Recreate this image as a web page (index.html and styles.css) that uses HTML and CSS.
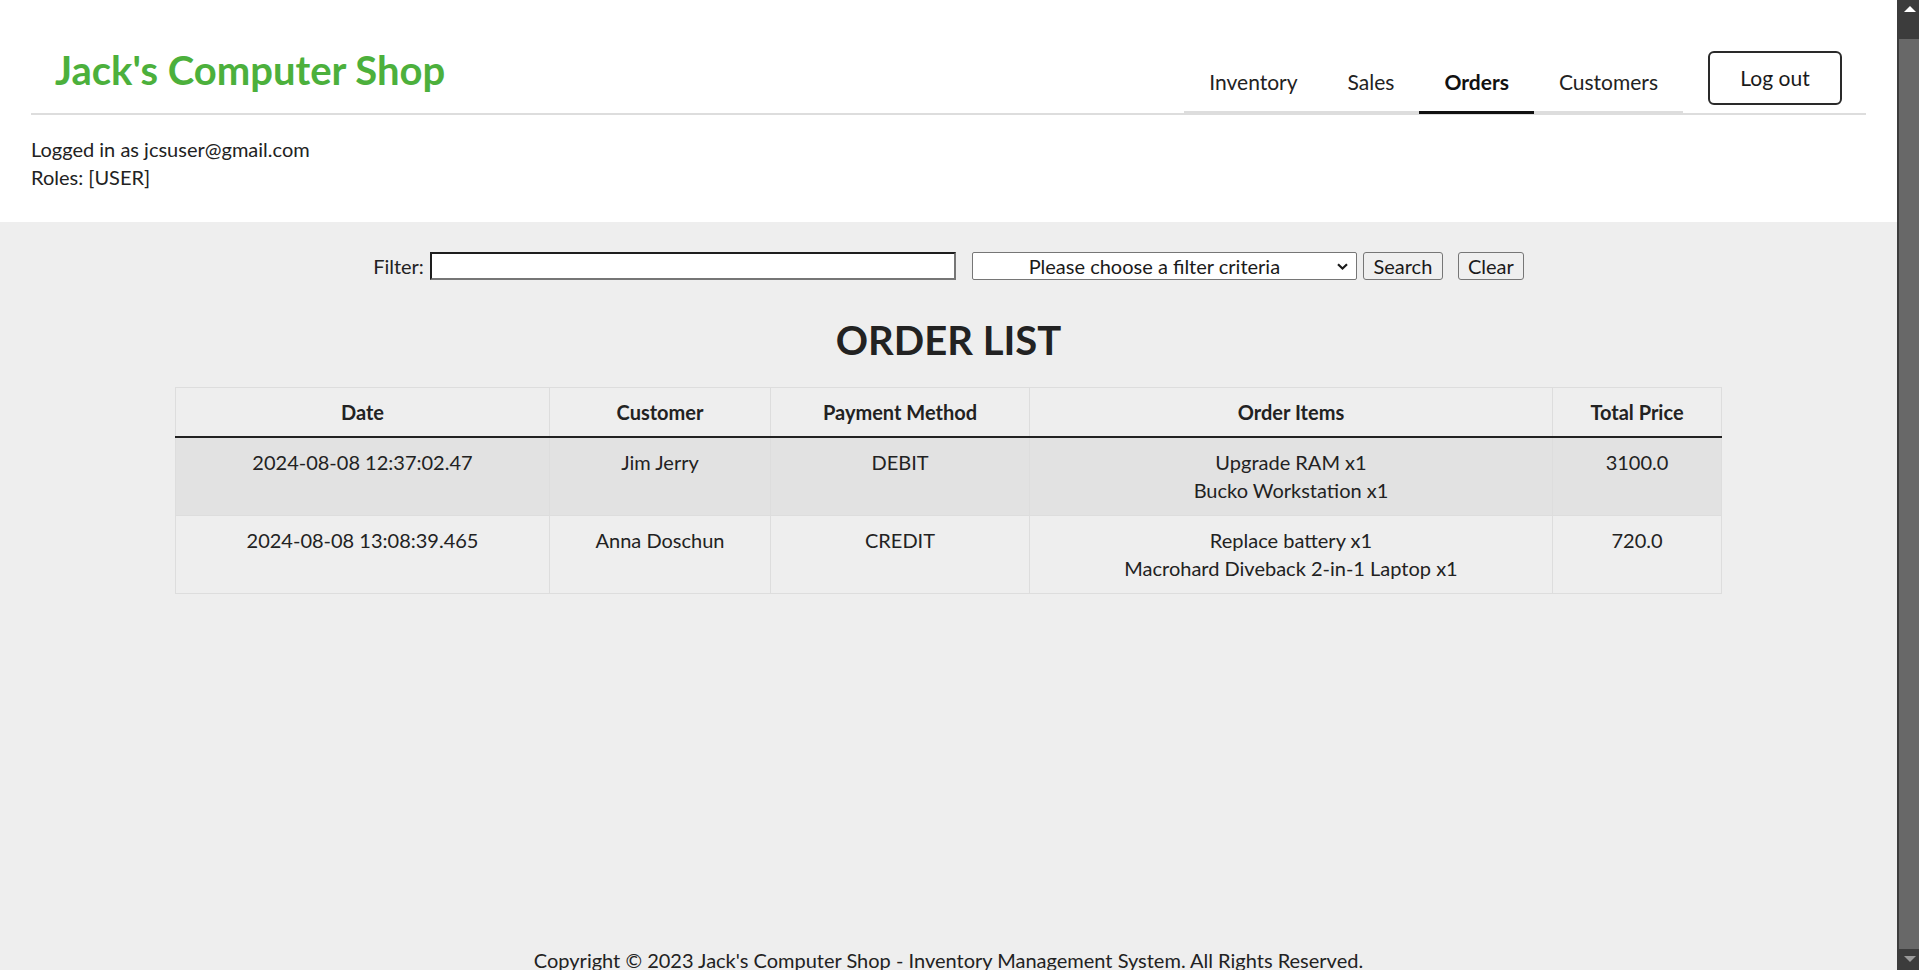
FILE: index.html
```html
<!DOCTYPE html>
<html lang="en">
<head>
<meta charset="utf-8">
<title>Jack's Computer Shop - Orders</title>
<link rel="stylesheet" href="styles.css">
</head>
<body>
<div class="viewport">
  <div class="page">
    <header class="site-header">
      <div class="topbar">
        <h1 class="brand">Jack's Computer Shop</h1>
        <nav class="tabs">
          <a class="tab" href="#">Inventory</a>
          <a class="tab" href="#">Sales</a>
          <a class="tab active" href="#">Orders</a>
          <a class="tab" href="#">Customers</a>
        </nav>
        <button class="logout" type="button">Log out</button>
      </div>
      <div class="user-info">
        <div>Logged in as jcsuser@gmail.com</div>
        <div>Roles: [USER]</div>
      </div>
    </header>

    <main class="main">
      <form class="filter-row">
        <label class="filter-label" for="filter">Filter:</label>
        <input class="filter-input" id="filter" type="text">
        <span class="select-wrap">
          <select class="filter-select">
            <option>Please choose a filter criteria</option>
          </select>
          <svg class="chevron" width="11" height="7" viewBox="0 0 11 7" aria-hidden="true"><path d="M1 1.3 L5.5 5.5 L10 1.3" fill="none" stroke="#1a1a1a" stroke-width="2.2"/></svg>
        </span>
        <button class="btn btn-search" type="button">Search</button>
        <button class="btn btn-clear" type="button">Clear</button>
      </form>

      <h1 class="list-title">ORDER LIST</h1>

      <table class="orders">
        <colgroup>
          <col class="c-date"><col class="c-cust"><col class="c-pay"><col class="c-items"><col class="c-total">
        </colgroup>
        <thead>
          <tr>
            <th>Date</th>
            <th>Customer</th>
            <th>Payment Method</th>
            <th>Order Items</th>
            <th>Total Price</th>
          </tr>
        </thead>
        <tbody>
          <tr class="hl">
            <td>2024-08-08 12:37:02.47</td>
            <td>Jim Jerry</td>
            <td>DEBIT</td>
            <td>Upgrade RAM x1<br>Bucko Workstation x1</td>
            <td>3100.0</td>
          </tr>
          <tr>
            <td>2024-08-08 13:08:39.465</td>
            <td>Anna Doschun</td>
            <td>CREDIT</td>
            <td>Replace battery x1<br>Macrohard Diveback 2-in-1 Laptop x1</td>
            <td>720.0</td>
          </tr>
        </tbody>
      </table>
    </main>

    <footer class="footer">Copyright © 2023 Jack's Computer Shop - Inventory Management System. All Rights Reserved.</footer>
  </div>
</div>
<div class="scrollbar" aria-hidden="true">
  <div class="sb-btn"><svg width="12" height="6" viewBox="0 0 12 6"><path d="M0 6 L6 0 L12 6 Z" fill="#ffffff"/></svg></div>
  <div class="sb-track"><div class="sb-thumb"></div></div>
  <div class="sb-btn sb-down"><svg width="12" height="6" viewBox="0 0 12 6"><path d="M0 0 L12 0 L6 6 Z" fill="#9a9a9a"/></svg></div>
</div>
</body>
</html>
```

FILE: styles.css
```css
* { box-sizing: border-box; }

html, body { height: 100%; }

body {
  margin: 0;
  display: flex;
  overflow: hidden;
  font-family: Lato, "Open Sans", sans-serif;
  font-size: 20px;
  line-height: 28px;
  color: #222222;
  background: #eeeeee;
}

.viewport {
  flex: 1;
  min-width: 0;
  height: 100vh;
  overflow: hidden;
}

/* fake classic scrollbar */
.scrollbar {
  width: 22px;
  flex: none;
  height: 100vh;
  display: flex;
  flex-direction: column;
  background: #3c3c3c;
}

.sb-btn {
  height: 21px;
  display: flex;
  justify-content: center;
  padding: 6px 0 0 3px;
}

.sb-down { padding-top: 7px; }

.sb-btn svg { display: block; }

.sb-track {
  flex: 1;
  display: flex;
  padding: 18px 0 0 2px;
}

.sb-thumb {
  flex: 1;
  background: #686868;
}

.page {
  min-height: 990px;
  display: flex;
  flex-direction: column;
}

/* Header */
.site-header {
  background: #ffffff;
  padding: 0 31px 31px;
}

.topbar {
  display: flex;
  align-items: flex-end;
  height: 115px;
  padding: 26px 24px 0;
  border-bottom: 2px solid #dddddd;
}

.brand {
  align-self: center;
  margin: 0 auto 0 0;
  font-size: 40px;
  line-height: 56px;
  font-weight: 700;
  color: #4cb03c;
}

.tabs {
  display: flex;
  border-bottom: 3px solid #dddddd;
  margin-bottom: -1px;
}

.tab {
  display: block;
  padding: 13px 25px 15px;
  margin-bottom: -3px;
  border-bottom: 3px solid transparent;
  font-size: 21px;
  color: #222222;
  text-decoration: none;
}

.tab.active {
  font-weight: 700;
  color: #111111;
  border-bottom-color: #111111;
}

.logout {
  width: 134px;
  height: 54px;
  margin: 0 0 8px 25px;
  padding: 0 0 1px;
  border: 2px solid #2a2a2a;
  border-radius: 6px;
  background: #ffffff;
  font-family: inherit;
  font-size: 21px;
  line-height: 28px;
  color: #1a1a1a;
}

.user-info {
  padding-top: 20px;
}

/* Main */
.main {
  flex: 1;
  padding-top: 30px;
}

.filter-row {
  display: flex;
  justify-content: center;
  align-items: center;
  margin: 0;
}

.filter-label { margin-right: 6px; }

.filter-input {
  width: 526px;
  height: 28px;
  margin: 0 16px 0 0;
  padding: 0 4px;
  background: #ffffff;
  border-style: solid;
  border-width: 2px;
  border-color: #1e1e1e #767676 #767676 #1e1e1e;
  font-family: inherit;
  font-size: 20px;
}

.select-wrap {
  position: relative;
  display: block;
  margin-right: 6px;
}

.filter-select {
  display: block;
  width: 385px;
  height: 28px;
  padding: 0 20px 0 0;
  border: 1px solid #767676;
  border-radius: 2px;
  background: #ffffff;
  font-family: inherit;
  font-size: 20px;
  line-height: 26px;
  color: #1a1a1a;
  text-align: center;
  appearance: none;
  -webkit-appearance: none;
}

.chevron {
  position: absolute;
  right: 9px;
  top: 11px;
  pointer-events: none;
}

.btn {
  height: 28px;
  padding: 0 9px;
  border: 1px solid #767676;
  border-radius: 3px;
  background: #efefef;
  font-family: inherit;
  font-size: 20px;
  line-height: 26px;
  color: #1a1a1a;
}

.btn-search { width: 80px; margin-right: 15px; }
.btn-clear { width: 66px; }

.list-title {
  margin: 32px 0 19px;
  text-align: center;
  font-size: 40px;
  line-height: 56px;
  font-weight: 700;
  color: #222222;
}

.orders {
  width: 1546px;
  margin: 0 auto;
  border-collapse: collapse;
  border: 1px solid #dddddd;
  table-layout: fixed;
}

.c-date { width: 374px; }
.c-cust { width: 221px; }
.c-pay { width: 259px; }
.c-items { width: 523px; }
.c-total { width: 169px; }

.orders th {
  padding: 10px;
  font-weight: 700;
  text-align: center;
  border-left: 1px solid #dddddd;
  border-right: 1px solid #dddddd;
  border-bottom: 2px solid #222222;
}

.orders td {
  padding: 10px 10px 11px;
  text-align: center;
  vertical-align: top;
  border: 1px solid #dddddd;
}

.orders tr.hl td { background: #e2e2e2; }

.footer {
  padding: 0 0 16px;
  text-align: center;
}
```
